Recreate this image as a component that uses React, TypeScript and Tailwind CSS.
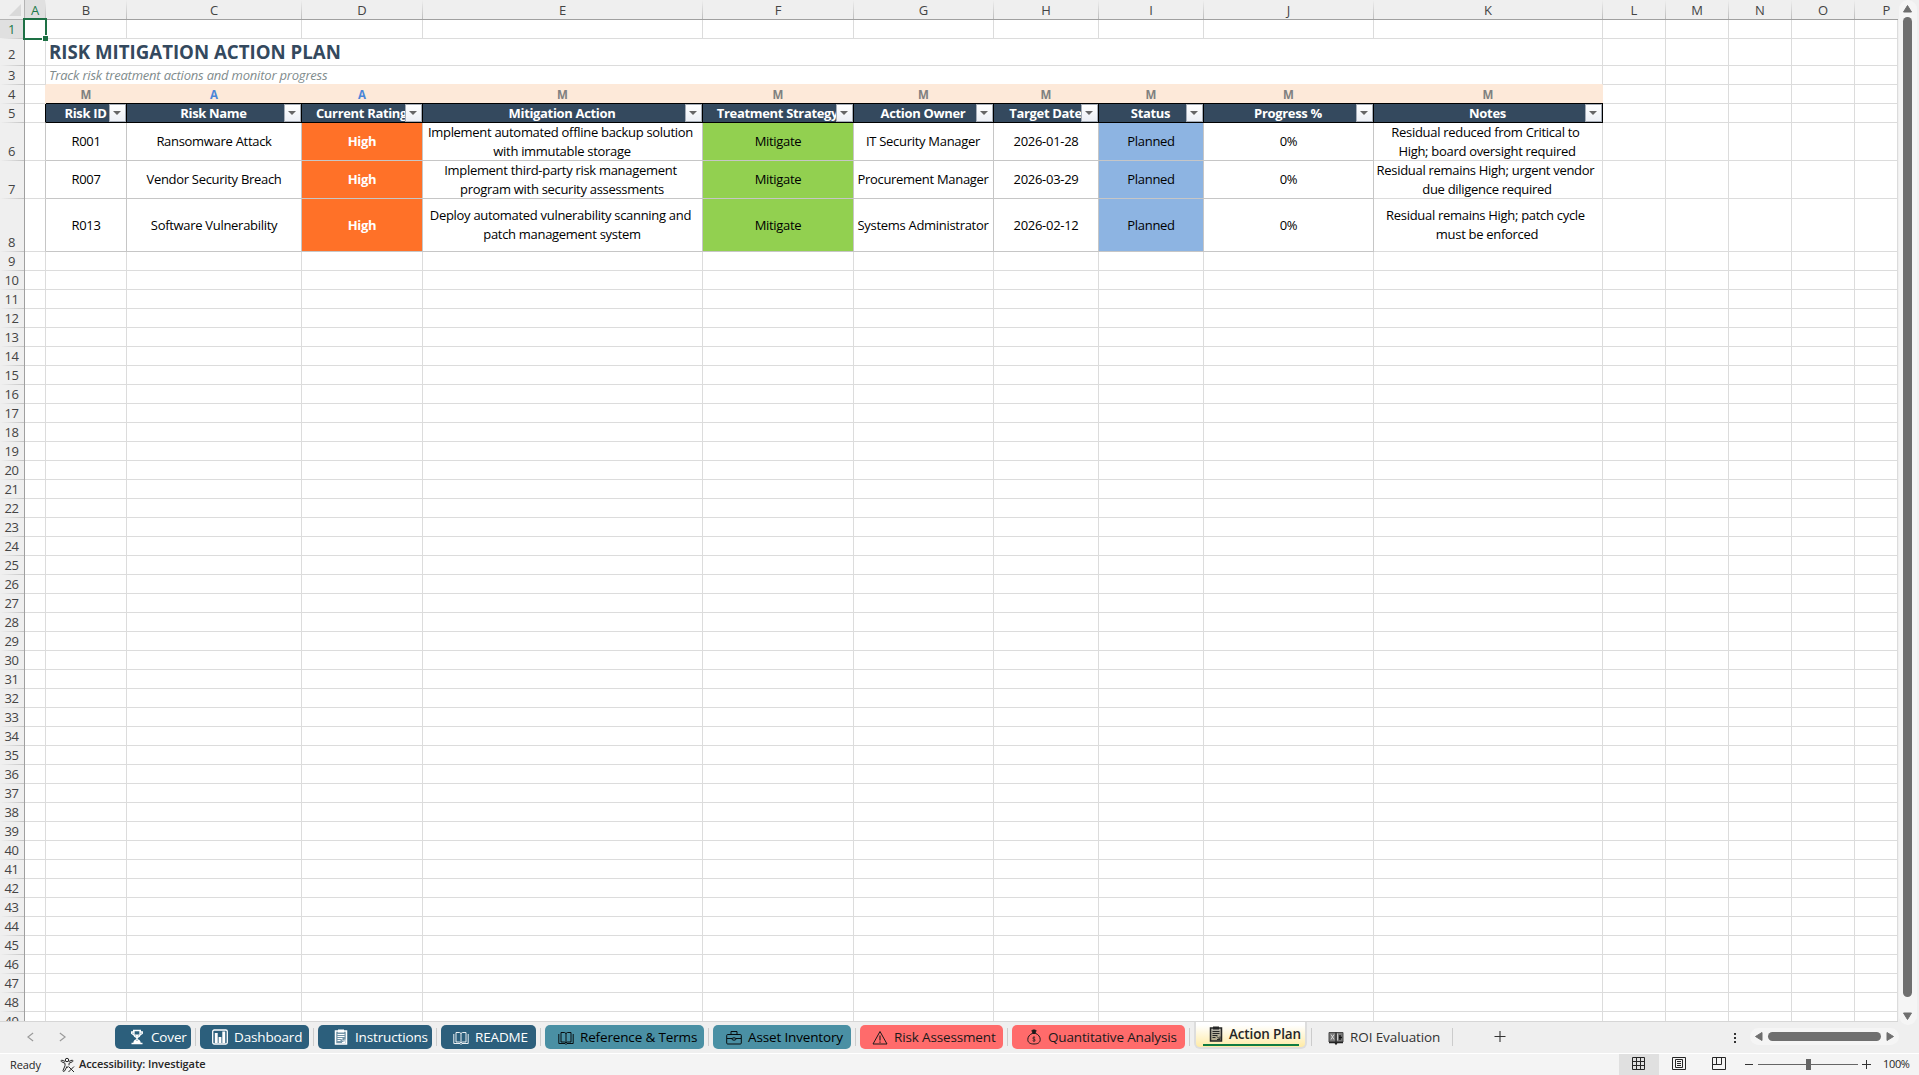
import { ReactNode } from 'react';
import clsx from 'clsx';

type Column = { id: string; width: string };

const columns: Column[] = [
  { id: 'A', width: 'w-[21px]' },
  { id: 'B', width: 'w-[81px]' },
  { id: 'C', width: 'w-[175px]' },
  { id: 'D', width: 'w-[121px]' },
  { id: 'E', width: 'w-[280px]' },
  { id: 'F', width: 'w-[151px]' },
  { id: 'G', width: 'w-[140px]' },
  { id: 'H', width: 'w-[105px]' },
  { id: 'I', width: 'w-[105px]' },
  { id: 'J', width: 'w-[170px]' },
  { id: 'K', width: 'w-[229px]' },
  { id: 'L', width: 'w-[63px]' },
  { id: 'M', width: 'w-[63px]' },
  { id: 'N', width: 'w-[63px]' },
  { id: 'O', width: 'w-[63px]' },
  { id: 'P', width: 'w-[43px]' },
];

const tableColumns = columns.slice(1, 11);
const outerColumns = columns.slice(11);

const modes = ['M', 'A', 'A', 'M', 'M', 'M', 'M', 'M', 'M', 'M'];

const headers = [
  'Risk ID',
  'Risk Name',
  'Current Rating',
  'Mitigation Action',
  'Treatment Strategy',
  'Action Owner',
  'Target Date',
  'Status',
  'Progress %',
  'Notes',
];

// wrapped lines keep their trailing space, like the sheet does when centering
const risks = [
  {
    height: 'h-[38px]',
    cells: [
      'R001',
      'Ransomware Attack',
      'High',
      'Implement automated offline backup solution \nwith immutable storage',
      'Mitigate',
      'IT Security Manager',
      '2026-01-28',
      'Planned',
      '0%',
      'Residual reduced from Critical to \nHigh; board oversight required',
    ],
  },
  {
    height: 'h-[38px]',
    cells: [
      'R007',
      'Vendor Security Breach',
      'High',
      'Implement third-party risk management \nprogram with security assessments',
      'Mitigate',
      'Procurement Manager',
      '2026-03-29',
      'Planned',
      '0%',
      'Residual remains High; urgent vendor \ndue diligence required',
    ],
  },
  {
    height: 'h-[53px]',
    cells: [
      'R013',
      'Software Vulnerability',
      'High',
      'Deploy automated vulnerability scanning and \npatch management system',
      'Mitigate',
      'Systems Administrator',
      '2026-02-12',
      'Planned',
      '0%',
      'Residual remains High; patch cycle \nmust be enforced',
    ],
  },
];

const cellFill: Record<string, string> = {
  D: 'bg-[#ff7128] font-bold text-white',
  F: 'bg-[#92d050] text-black',
  I: 'bg-[#8db4e2] text-black',
};

const emptyRows = Array.from({ length: 40 }, (_, i) => i + 9);

function RowNumber({ n, active }: { n: number; active?: boolean }) {
  return (
    <div
      className={clsx(
        'flex w-[25px] shrink-0 flex-col justify-end border-r border-[#a0a0a0]',
        active ? 'bg-[#e0e0e0] text-[#1e7a4a]' : 'bg-[#efefef] text-[#444444]'
      )}
    >
      <div
        className={clsx(
          'pr-px text-center text-[13px] leading-[18px] tracking-[-0.4px]',
          n === 2 && 'pb-[2px]'
        )}
      >
        {n}
      </div>
      <div className="h-px bg-linear-to-r from-[#efefef] to-[#c4c4c4]" />
    </div>
  );
}

function Blank({ cols }: { cols: Column[] }) {
  return (
    <>
      {cols.map((c) => (
        <div key={c.id} className={clsx(c.width, 'shrink-0 border-r border-b border-[#dcdcdc]')} />
      ))}
    </>
  );
}

function FilterButton() {
  return (
    <span className="absolute top-0 right-0 flex h-[18px] w-[17px] items-center justify-center border border-[#a5adb8] bg-linear-to-b from-white to-[#eceff5] pr-px">
      <svg width="8" height="4" viewBox="0 0 8 4">
        <path d="M0 0h8L4 4z" fill="#666666" />
      </svg>
    </span>
  );
}

function ColumnHeaders() {
  return (
    <div className="flex h-5">
      <div className="flex w-[25px] shrink-0 items-end justify-end border-r border-b border-[#b4b4b4] bg-[#efefef] pr-[3px] pb-[3px]">
        <svg width="12" height="12" viewBox="0 0 12 12">
          <path d="M12 0v12H0z" fill="#d9d9d9" />
        </svg>
      </div>
      {columns.map((c) => (
        <div
          key={c.id}
          className={clsx(
            c.width,
            'flex shrink-0 border-b border-[#a0a0a0]',
            c.id === 'A' ? 'bg-[#e0e0e0] text-[#1e7a4a]' : 'bg-[#efefef] text-[#444444]'
          )}
        >
          <div className={clsx('flex-1 pt-px text-center text-[13px] leading-[19px]', c.id === 'P' && 'pl-5')}>
            {c.id}
          </div>
          {c.id !== 'P' && <div className="w-px bg-linear-to-b from-[#efefef] to-[#bdbdbd]" />}
        </div>
      ))}
    </div>
  );
}

function Sheet() {
  return (
    <div className="relative h-[1022px] w-[1898px] overflow-hidden border-b border-[#d6d6d6] bg-white">
      <ColumnHeaders />

      <div className="flex h-[19px]">
        <RowNumber n={1} active />
        <Blank cols={columns} />
      </div>

      <div className="flex h-[27px]">
        <RowNumber n={2} />
        <Blank cols={columns.slice(0, 1)} />
        <div className="w-[1557px] shrink-0 border-r border-b border-[#dcdcdc] pl-[3px] text-[18.67px] leading-[26px] font-bold whitespace-nowrap text-[#34495e]">
          RISK MITIGATION ACTION PLAN
        </div>
        <Blank cols={outerColumns} />
      </div>

      <div className="flex h-[19px]">
        <RowNumber n={3} />
        <Blank cols={columns.slice(0, 1)} />
        <div className="w-[1557px] shrink-0 border-r border-b border-r-[#dcdcdc] border-b-[#fde9d9] pl-[3px] text-[13px] leading-[18px] tracking-[-0.2px] whitespace-nowrap text-[#7f8c8d] italic">
          Track risk treatment actions and monitor progress
        </div>
        <Blank cols={outerColumns} />
      </div>

      <div className="flex h-[19px]">
        <RowNumber n={4} />
        <div className="w-[21px] shrink-0 border-r border-b border-r-[#fde9d9] border-b-[#dcdcdc]" />
        {tableColumns.map((c, i) => (
          <div
            key={c.id}
            className={clsx(
              c.width,
              'shrink-0 border-b border-black bg-[#fde9d9] pt-px pr-px text-center text-[11.5px] leading-[18px] font-bold',
              modes[i] === 'A' ? 'text-[#4a86d8]' : 'text-[#808080]'
            )}
          >
            {modes[i]}
          </div>
        ))}
        <Blank cols={outerColumns} />
      </div>

      <div className="flex h-[19px]">
        <RowNumber n={5} />
        <div className="w-[21px] shrink-0 border-r border-b border-r-black border-b-[#dcdcdc]" />
        {tableColumns.map((c, i) => (
          <div
            key={c.id}
            className={clsx(
              c.width,
              'relative shrink-0 overflow-hidden border-r border-b border-black bg-[#34495e] pr-px text-center text-[13px] leading-[18px] font-bold tracking-[-0.33px] whitespace-nowrap text-white'
            )}
          >
            {headers[i]}
            <FilterButton />
          </div>
        ))}
        <Blank cols={outerColumns} />
      </div>

      {risks.map((row, r) => (
        <div key={row.cells[0]} className={clsx('flex', row.height)}>
          <RowNumber n={r + 6} />
          <div className="w-[21px] shrink-0 border-r border-b border-r-[#c6c6c6] border-b-[#dcdcdc]" />
          {tableColumns.map((c, i) => (
            <div
              key={c.id}
              className={clsx(
                c.width,
                'flex shrink-0 items-center justify-center border-r border-b text-center text-[13px] leading-[19px] tracking-[-0.3px] whitespace-pre',
                c.id === 'K' ? 'border-[#dcdcdc] pr-[2px]' : 'border-[#c6c6c6]',
                (c.id === 'E' || c.id === 'G') && 'pr-px',
                cellFill[c.id] ?? 'text-black'
              )}
            >
              {row.cells[i]}
            </div>
          ))}
          <Blank cols={outerColumns} />
        </div>
      ))}

      {emptyRows.map((n) => (
        <div key={n} className="flex h-[19px]">
          <RowNumber n={n} />
          <Blank cols={columns} />
        </div>
      ))}
      <div className="flex h-[19px]">
        <RowNumber n={49} />
        <Blank cols={columns} />
      </div>

      {/* active cell outline */}
      <div className="absolute top-[18px] left-[23px] h-[22px] w-6 border-2 border-[#1e7145]">
        <div className="absolute -right-[3px] -bottom-[3px] size-[6px] border-t border-l border-white bg-[#1e7145]" />
      </div>
    </div>
  );
}

function VerticalScrollbar() {
  return (
    <div className="flex w-[21px] flex-col items-center bg-[#efefef] pr-[2px]">
      <div className="flex h-[1025px] w-[18px] shrink-0 flex-col items-center rounded-full bg-[#f5f5f5] pt-[5px] pb-[5px]">
        <svg width="9" height="8" viewBox="0 0 9 8">
          <path d="M4.5 0.5L8.5 7H0.5z" fill="#6f6f6f" stroke="#6f6f6f" strokeLinejoin="round" />
        </svg>
        <div className="mt-1 h-[980px] w-[9px] rounded-full bg-[#6f6f6f]" />
        <svg className="mt-auto" width="9" height="8" viewBox="0 0 9 8">
          <path d="M4.5 7.5L0.5 1h8z" fill="#6f6f6f" stroke="#6f6f6f" strokeLinejoin="round" />
        </svg>
      </div>
    </div>
  );
}

function Icon({ children, className }: { children: ReactNode; className?: string }) {
  return (
    <svg
      className={clsx('shrink-0', className)}
      width="16"
      height="16"
      viewBox="0 0 16 16"
      fill="none"
      stroke="currentColor"
    >
      {children}
    </svg>
  );
}

const TrophyIcon = () => (
  <Icon>
    <path d="M4 1.5h8M5 2v3.5c0 1.5 1 2.5 3 3 2-.5 3-1.500 3-3V2M4.800 3H2.700v1.500l2.300 1.500M11.200 3h2.100v1.500L11 6" strokeWidth="1.300" />
    <path d="M8 8.500v2M5 14.500c0-2 1-3.500 3-4 2 .5 3 2 3 4M2.500 14.500h11" strokeWidth="1.500" />
    <path d="M6 12h4v2.500H6zM5.500 5.500h5L8 8.500z" fill="currentColor" stroke="none" />
  </Icon>
);

const ChartIcon = () => (
  <Icon>
    <rect x="0.700" y="1" width="14.600" height="14" rx="1.500" strokeWidth="1.300" />
    <path d="M2.800 4h2.900v10H2.800zM6.600 8h2.800v6H6.600zM10.300 2.500h2.900V14h-2.900z" fill="currentColor" stroke="none" />
  </Icon>
);

const ClipboardIcon = () => (
  <Icon>
    <path d="M2.500 2h11v13h-11z" fill="currentColor" fillOpacity="0.35" strokeWidth="1.500" />
    <path d="M5 .5h6v3H5z" fill="currentColor" stroke="none" />
    <path d="M4.500 5.500h7M4.500 7.500h7M4.500 9.500h5M4.500 11.500h3M9 10.500l3 3M12 10.500v3H9" />
  </Icon>
);

const BookIcon = () => (
  <Icon className="translate-y-px">
    <path d="M3 2.500h3.500L8 3.500l1.500-1H13V12H9.500L8 13l-1.500-1H3zM8 3.500V13" strokeWidth="0.900" />
    <path d="M.8 4v9.500H7l1 1 1-1h6.200V4" strokeWidth="0.900" />
  </Icon>
);

const BriefcaseIcon = () => (
  <Icon className="translate-y-px">
    <rect x="0.700" y="4.500" width="14.600" height="9.500" rx="1" strokeWidth="0.900" />
    <path d="M5 4.500V1.500h6v3M1 8.500h5M10 8.500h5" strokeWidth="0.900" />
    <ellipse cx="8" cy="9" rx="2" ry="1.200" strokeWidth="0.900" />
  </Icon>
);

const WarningIcon = () => (
  <Icon className="translate-y-px">
    <path d="M8 1.500l7 12.500H1z" strokeWidth="1" strokeLinejoin="round" />
    <path d="M8 5.500v5M8 11.500v1.200" strokeWidth="1.100" />
  </Icon>
);

const MoneyBagIcon = () => (
  <Icon>
    <path d="M6.200 4.500C3.500 5.500 1.800 8 1.800 10.500c0 3 2.200 4.500 6.200 4.500s6.200-1.500 6.200-4.500c0-2.500-1.700-5-4.400-6z" strokeWidth="1" />
    <path d="M5.800 1.500L8 .8l2.200.7-1 2.500H6.800z" fill="currentColor" strokeWidth="0.800" />
    <path d="M9.200 8.600c-.7-.8-2.500-.6-2.500.5 0 1.300 2.600.7 2.600 2 0 1.200-2 1.300-2.700.4M8 7.500v5.300" strokeWidth="0.700" />
  </Icon>
);

const LedgerIcon = () => (
  <Icon className="translate-y-px">
    <path d="M1 2.500h14v9.500H1z" fill="#777777" stroke="#4a4a4a" />
    <path d="M1 12.500h6l1 1.500 1-1.500h6" stroke="#222222" strokeWidth="1.500" />
    <path d="M3 4.500l3 5M6 4.500l-3 5" stroke="#d8d8d8" />
    <path d="M8 2.500v10" stroke="#111111" />
    <path d="M11 7.500h3M12 5v5" stroke="#111111" strokeWidth="1.300" />
    <path d="M9.500 3.500v7" stroke="#c8c8c8" />
  </Icon>
);

const AccessibilityIcon = () => (
  <Icon>
    <circle cx="7" cy="3" r="1.700" />
    <path d="M5.300 4.500L2 3.200C1 3 .7 4.300 1.500 4.700L5 6.300v2.500L3 13.500c-.2 1 1 1.500 1.500.6L7 9.500l.8 1.300M8.700 4.500L12 3.200c1-.2 1.300 1.100.5 1.500L9 6.300v2" />
    <path d="M8.500 9.500l5.500 5.500M14 9.500L8.500 15" />
  </Icon>
);

const tabs = [
  { name: 'Cover', icon: TrophyIcon, style: 'w-[76px] pl-[14px] bg-[#2c5f7c] text-white' },
  { name: 'Dashboard', icon: ChartIcon, style: 'w-[109px] pl-[12px] bg-[#2c5f7c] text-white' },
  { name: 'Instructions', icon: ClipboardIcon, style: 'w-[114px] pl-[15px] bg-[#2c5f7c] text-white' },
  { name: 'README', icon: BookIcon, style: 'w-[95px] pl-[12px] bg-[#2c5f7c] text-white' },
  { name: 'Reference & Terms', icon: BookIcon, style: 'w-[159px] pl-[13px] bg-[#4a90a4] text-black' },
  { name: 'Asset Inventory', icon: BriefcaseIcon, style: 'w-[138px] pl-[13px] bg-[#4a90a4] text-black' },
  { name: 'Risk Assessment', icon: WarningIcon, style: 'w-[143px] pl-[12px] bg-[#ff6b6b] text-[#1a1a1a]' },
  { name: 'Quantitative Analysis', icon: MoneyBagIcon, style: 'w-[173px] pl-[14px] bg-[#ff6b6b] text-[#1a1a1a]' },
];

function Separator() {
  return <div className="mx-1 mt-[6px] h-[18px] w-px shrink-0 bg-[#cccccc]" />;
}

function SheetTabs() {
  return (
    <div className="flex h-[31px] bg-[#efefef]">
      <div className="flex w-[115px] shrink-0 gap-[25px] pt-[10px] pl-[27px] text-[#999999]">
        <svg width="7" height="10" viewBox="0 0 8 10" fill="none" stroke="currentColor" strokeWidth="1.300">
          <path d="M7 .5L1 5l6 4.500" />
        </svg>
        <svg width="7" height="10" viewBox="0 0 8 10" fill="none" stroke="currentColor" strokeWidth="1.300">
          <path d="M1 .5L7 5 1 9.500" />
        </svg>
      </div>

      {tabs.map((tab) => {
        const TabIcon = tab.icon;
        return (
          <div key={tab.name} className="flex">
            <div
              className={clsx(
                'mt-[3px] flex h-6 shrink-0 items-center gap-[6px] rounded-[5px] text-[13.5px] tracking-[-0.15px] whitespace-nowrap',
                tab.style
              )}
            >
              <TabIcon />
              {tab.name}
            </div>
            <Separator />
          </div>
        );
      })}

      <div className="-mt-px flex h-7 w-[113px] shrink-0 flex-col rounded-b-[6px] border-x-2 border-b-2 border-[#dddddd] bg-linear-to-b from-white from-15% to-[#ffeba5] pl-[7px]">
        <div className="flex h-[23px] items-center gap-[5px] pt-[3px] pl-[5px] text-[13.5px] font-semibold tracking-[-0.15px] whitespace-nowrap text-[#262626]">
          <ClipboardIcon />
          Action Plan
        </div>
        <div className="h-[2px] w-24 bg-[#107c41]" />
      </div>
      <Separator />
      <div className="mt-[3px] flex h-6 w-[132px] shrink-0 items-center gap-[6px] pl-[12px] text-[13.5px] tracking-[-0.1px] whitespace-nowrap text-[#333333]">
        <LedgerIcon />
        ROI Evaluation
      </div>
      <Separator />

      <svg className="mt-[9px] ml-[37px]" width="12" height="12" viewBox="0 0 12 12" stroke="#333333">
        <path d="M.5 5.500h11M6 0v11" strokeWidth="1.100" />
      </svg>

      <div className="ml-auto flex items-start pt-[6px] pr-[20px]">
        <div className="mt-[5px] mr-[14px] flex flex-col gap-[2px]">
          <div className="size-[2px] bg-[#333333]" />
          <div className="size-[2px] bg-[#333333]" />
          <div className="size-[2px] bg-[#333333]" />
        </div>
        <div className="flex h-[17px] w-[149px] items-center justify-between rounded-full bg-[#f5f5f5] px-[5px]">
          <svg width="8" height="9" viewBox="0 0 8 9">
            <path d="M.5 4.500L7 .5v8z" fill="#6f6f6f" stroke="#6f6f6f" strokeLinejoin="round" />
          </svg>
          <div className="h-[9px] w-[113px] rounded-full bg-[#6f6f6f]" />
          <svg width="8" height="9" viewBox="0 0 8 9">
            <path d="M7.500 4.500L1 .5v8z" fill="#6f6f6f" stroke="#6f6f6f" strokeLinejoin="round" />
          </svg>
        </div>
      </div>
    </div>
  );
}

function StatusBar() {
  return (
    <div className="flex h-[22px] items-center border-t border-white bg-[#f4f4f4] text-[11px] text-[#262626]">
      <span className="w-[51px] pt-px pl-[10px] tracking-[-0.1px]">Ready</span>
      <span className="ml-[9px] flex items-center gap-[3px] font-semibold tracking-[-0.1px]">
        <AccessibilityIcon />
        Accessibility: Investigate
      </span>

      <div className="ml-auto flex h-full items-center">
        <div className="flex h-full w-10 items-center justify-center bg-[#e0e0e0]">
          <svg className="mb-px" width="14" height="14" viewBox="0 0 14 14" fill="none" stroke="#262626">
            <path d="M.5 .5h12v12H.5zM4.500 .5v12M8.500 .5v12M.5 4.500h12M.5 8.500h12" />
          </svg>
        </div>
        <div className="flex h-full w-10 items-center justify-center">
          <svg className="mb-px" width="14" height="14" viewBox="0 0 14 14" fill="none" stroke="#262626">
            <path d="M.5 .5h13v12H.5zM3.500 2.500h7v8h-7zM5 4.500h4M5 6.500h4M5 8.500h4" />
          </svg>
        </div>
        <div className="flex h-full w-10 items-center justify-center">
          <svg className="mb-px" width="14" height="14" viewBox="0 0 14 14" fill="none" stroke="#262626">
            <path d="M.5 .5h13v12H.5zM4.500 .5v7M9.500 .5v7M.5 7.500h9" />
          </svg>
        </div>
        <div className="ml-[6px] h-px w-2 bg-[#333333]" />
        <div className="relative ml-[5px] h-px w-[100px] bg-[#666666]">
          <div className="absolute -top-[5px] left-12 h-[11px] w-[5px] bg-[#666666]" />
        </div>
        <svg className="ml-[4px]" width="9" height="9" viewBox="0 0 9 9" stroke="#333333">
          <path d="M0 4.500h9M4.500 0v9" />
        </svg>
        <span className="w-12 pl-3 tracking-[-0.35px]">100%</span>
      </div>
    </div>
  );
}

export default function App() {
  return (
    <div className="h-[1075px] w-[1919px] overflow-hidden bg-[#efefef] font-['Open_Sans','Noto_Sans',sans-serif]">
      <div className="flex h-[1022px]">
        <Sheet />
        <VerticalScrollbar />
      </div>
      <SheetTabs />
      <StatusBar />
    </div>
  );
}
